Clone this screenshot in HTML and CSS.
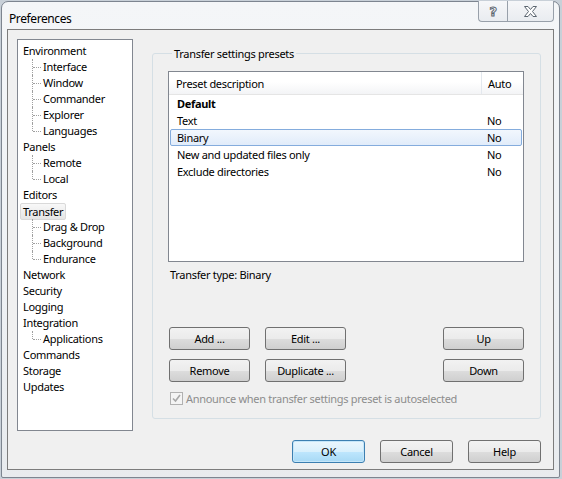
FILE: index.html
```html
<!DOCTYPE html>
<html lang="en">
<head>
    <meta charset="UTF-8">
    <title>Preferences</title>
    <link rel="stylesheet" href="styles.css">
</head>
<body>

<div class="window">
    <div class="titlebar">
        <span class="title">Preferences</span>
        <div class="caption-btns">
            <div class="cap-btn help-btn"><span class="qmark">?</span></div>
            <div class="cap-btn close-btn">
                <svg width="15" height="13" viewBox="0 0 15 13">
                    <path d="M1.5 1.5 H5 L7.5 4.5 L10 1.5 H13.5 L9.5 6.5 L13.5 11.5 H10 L7.5 8.5 L5 11.5 H1.5 L5.5 6.5 Z"
                          fill="#fff" stroke="#5c6670" stroke-width="1"/>
                </svg>
            </div>
        </div>
    </div>

    <div class="client">
        <div class="main">
            <ul class="tree">
                <li>Environment</li>
                <li class="child">Interface</li>
                <li class="child">Window</li>
                <li class="child">Commander</li>
                <li class="child">Explorer</li>
                <li class="child last">Languages</li>
                <li>Panels</li>
                <li class="child">Remote</li>
                <li class="child last">Local</li>
                <li>Editors</li>
                <li><span class="selected">Transfer</span></li>
                <li class="child">Drag &amp; Drop</li>
                <li class="child">Background</li>
                <li class="child last">Endurance</li>
                <li>Network</li>
                <li>Security</li>
                <li>Logging</li>
                <li>Integration</li>
                <li class="child last">Applications</li>
                <li>Commands</li>
                <li>Storage</li>
                <li>Updates</li>
            </ul>

            <fieldset class="group">
                <legend>Transfer settings presets</legend>

                <div class="listview">
                    <div class="lv-header">
                        <div class="col-desc">Preset description</div>
                        <div class="col-auto">Auto</div>
                    </div>
                    <div class="lv-row bold"><div class="col-desc">Default</div><div class="col-auto"></div></div>
                    <div class="lv-row"><div class="col-desc">Text</div><div class="col-auto">No</div></div>
                    <div class="lv-row active"><div class="col-desc">Binary</div><div class="col-auto">No</div></div>
                    <div class="lv-row"><div class="col-desc">New and updated files only</div><div class="col-auto">No</div></div>
                    <div class="lv-row"><div class="col-desc">Exclude directories</div><div class="col-auto">No</div></div>
                </div>

                <div class="transfer-type">Transfer type: Binary</div>

                <div class="btn-grid">
                    <button class="btn">Add ...</button>
                    <button class="btn">Edit ...</button>
                    <span></span>
                    <button class="btn">Up</button>
                    <button class="btn">Remove</button>
                    <button class="btn">Duplicate ...</button>
                    <span></span>
                    <button class="btn">Down</button>
                </div>

                <label class="check disabled">
                    <span class="box">
                        <svg width="9" height="9" viewBox="0 0 9 9">
                            <path d="M1 4.5 L3.5 7 L8 1" fill="none" stroke="#a8a8a8" stroke-width="1.6"/>
                        </svg>
                    </span>
                    Announce when transfer settings preset is autoselected
                </label>
            </fieldset>
        </div>

        <div class="footer">
            <button class="btn dlg default">OK</button>
            <button class="btn dlg">Cancel</button>
            <button class="btn dlg">Help</button>
        </div>
    </div>
</div>

</body>
</html>
```

FILE: styles.css
```css
html, body {
    margin: 0;
    padding: 0;
}

body {
    background: #c8d0d8;
    font-family: 'Noto Sans', 'Open Sans', sans-serif;
    font-size: 11px;
    letter-spacing: -0.3px;
    color: #000;
    width: 562px;
    height: 479px;
    overflow: hidden;
    padding: 1px 0 0 1px;
    box-sizing: border-box;
}

.window {
    width: 559px;
    height: 477px;
    box-sizing: border-box;
    border: 1px solid #7d8590;
    border-radius: 7px 7px 2px 2px;
    background: linear-gradient(to bottom, #f4f6f8, #eef1f4 60%, #e8ebee);
    padding: 0 5px 7px 5px;
    display: flex;
    flex-direction: column;
}

.titlebar {
    height: 29px;
    display: flex;
    justify-content: space-between;
    align-items: flex-start;
}

.title {
    font-size: 12px;
    letter-spacing: -0.4px;
    margin: 8px 0 0 2px;
    color: #000;
}

.caption-btns {
    display: flex;
    margin-top: -1px;
}

.cap-btn {
    height: 20px;
    border: 1px solid #98a0aa;
    border-top: none;
    display: flex;
    align-items: center;
    justify-content: center;
    background: linear-gradient(to bottom, #f6f7f9, #e9ecf0);
}

.help-btn {
    width: 28px;
    border-radius: 0 0 0 4px;
    border-right: none;
}

.close-btn {
    width: 45px;
    border-radius: 0 0 4px 0;
}

.qmark {
    font-family: 'DejaVu Sans', sans-serif;
    font-weight: bold;
    font-size: 13px;
    color: #fff;
    -webkit-text-stroke: 1px #5c6670;
    line-height: 1;
}

.client {
    flex: 1;
    border: 1px solid #7c7c7c;
    background: #f0f0f0;
    display: flex;
    flex-direction: column;
    padding: 9px 12px 6px 9px;
}

.main {
    display: flex;
    gap: 19px;
    height: 392px;
}

/* navigation tree */
.tree {
    list-style: none;
    margin: 0;
    padding: 3px 0 0 0;
    width: 116px;
    box-sizing: border-box;
    border: 1px solid #828790;
    background: #fff;
}

.tree li {
    height: 16px;
    line-height: 16px;
    padding-left: 5px;
    white-space: nowrap;
}

.tree li.child {
    position: relative;
    padding-left: 25px;
}

.tree li.child::before {
    content: "";
    position: absolute;
    left: 14px;
    top: 0;
    height: 16px;
    border-left: 1px dotted #a0a0a0;
}

.tree li.child.last::before {
    height: 8px;
}

.tree li.child::after {
    content: "";
    position: absolute;
    left: 15px;
    top: 8px;
    width: 8px;
    border-top: 1px dotted #a0a0a0;
}

.tree .selected {
    display: inline-block;
    margin-left: -3px;
    padding: 0 2px;
    height: 15px;
    line-height: 15px;
    border: 1px solid #d9d9d9;
    border-radius: 2px;
    background: linear-gradient(to bottom, #f8f8f8, #e5e5e5);
}

/* group box */
.group {
    flex: 1;
    margin: 7px 0 0 0;
    height: 373px;
    box-sizing: border-box;
    border: 1px solid #d5dfe5;
    border-radius: 3px;
    padding: 10px 16px 0 15px;
}

.group legend {
    padding: 0 2px;
    margin-left: 4px;
}

.listview {
    height: 191px;
    box-sizing: border-box;
    border: 1px solid #828790;
    background: #fff;
}

.lv-header {
    display: flex;
    height: 23px;
    line-height: 22px;
    padding-top: 1px;
    box-sizing: border-box;
    background: linear-gradient(to bottom, #fff 45%, #f3f4f6);
    border-bottom: 1px solid #e5e5e5;
}

.lv-header .col-desc {
    border-right: 1px solid #e3e8ee;
    margin-top: -1px;
    padding-top: 1px;
}

.col-desc {
    flex: 1;
    padding-left: 7px;
}

.col-auto {
    width: 41px;
    padding-left: 6px;
    box-sizing: border-box;
}

.lv-row {
    display: flex;
    height: 17px;
    line-height: 15px;
    margin: 0 1px;
    box-sizing: border-box;
    border: 1px solid transparent;
}

.lv-row .col-desc {
    padding-left: 6px;
}

.lv-row .col-auto {
    width: 40px;
}

.lv-row.bold {
    font-weight: bold;
}

.lv-row.active {
    border-color: #84acdd;
    border-radius: 2px;
    background: linear-gradient(to bottom, #f2f7fd, #e1ecfa);
}

.transfer-type {
    margin: 5px 0 0 2px;
    height: 16px;
}

.btn-grid {
    display: grid;
    grid-template-columns: 81px 81px 1fr 81px;
    column-gap: 15px;
    row-gap: 9px;
    margin: 44px 0 0 1px;
}

.btn {
    font-family: 'Noto Sans', 'Open Sans', sans-serif;
    font-size: 11px;
    letter-spacing: -0.3px;
    height: 23px;
    padding: 0;
    border: 1px solid #707070;
    border-radius: 3px;
    background: linear-gradient(to bottom, #f2f2f2 0%, #ebebeb 50%, #dddddd 51%, #cfcfcf 100%);
    color: #000;
}

.check {
    display: flex;
    align-items: center;
    gap: 3px;
    margin: 9px 0 0 2px;
}

.check.disabled {
    color: #8d8d8d;
}

.check .box {
    width: 13px;
    height: 13px;
    box-sizing: border-box;
    border: 1px solid #b1b1b1;
    background: #f4f4f4;
    display: flex;
    align-items: center;
    justify-content: center;
}

.footer {
    display: flex;
    justify-content: flex-end;
    gap: 15px;
    margin-top: 9px;
}

.btn.dlg {
    width: 73px;
}

.btn.default {
    border-color: #3c7fb1;
    background: linear-gradient(to bottom, #eaf6fd 0%, #d9f0fc 50%, #bee6fd 51%, #a7d9f5 100%);
    box-shadow: inset 0 0 0 1px #c5e6f9;
}
```
